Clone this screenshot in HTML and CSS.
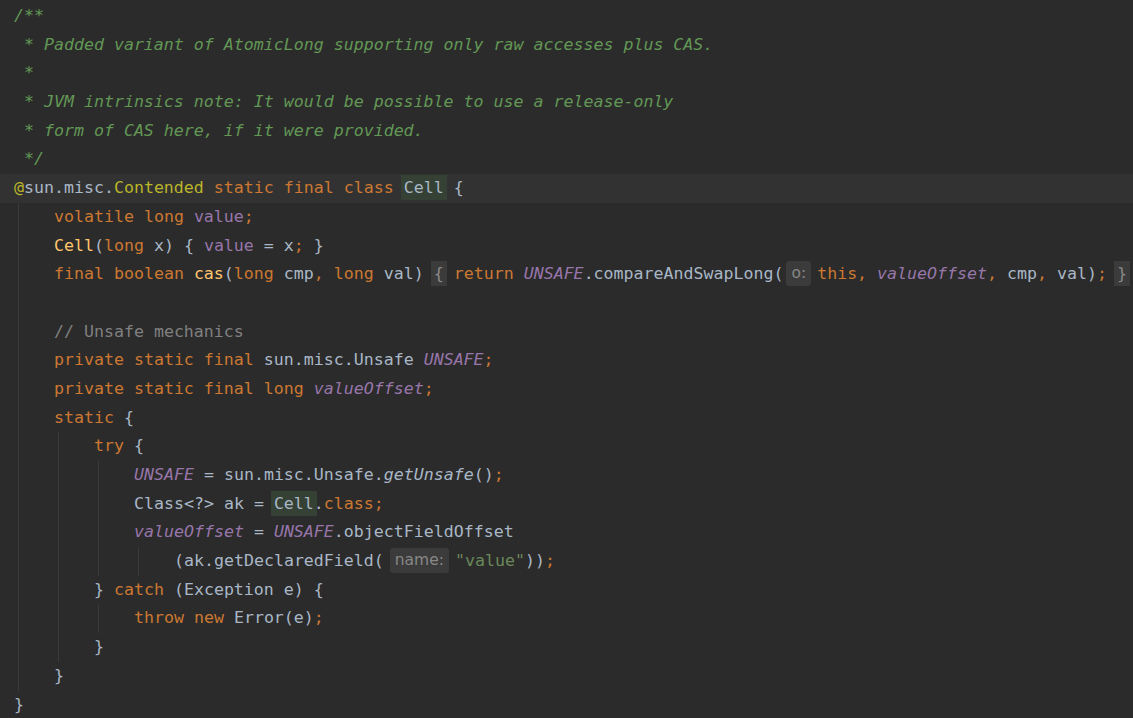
FILE: index.html
```html
<!DOCTYPE html>
<html lang="en">
<head>
    <meta charset="UTF-8">
    <title>Cell.java</title>
    <link rel="stylesheet" href="styles.css">
</head>
<body>

<div class="editor">
    <div class="ln"><span class="doc">/**</span></div>
    <div class="ln"><span class="doc"> * Padded variant of AtomicLong supporting only raw accesses plus CAS.</span></div>
    <div class="ln"><span class="doc"> *</span></div>
    <div class="ln"><span class="doc"> * JVM intrinsics note: It would be possible to use a release-only</span></div>
    <div class="ln"><span class="doc"> * form of CAS here, if it were provided.</span></div>
    <div class="ln"><span class="doc"> */</span></div>
    <div class="ln current"><span class="an">@</span>sun.misc.<span class="an">Contended</span> <span class="kw">static final class</span> <span class="hl">Cell</span> {</div>
    <div class="ln"><span class="ind"></span><span class="kw">volatile long</span> <span class="fd">value</span><span class="kw">;</span></div>
    <div class="ln"><span class="ind"></span><span class="fn">Cell</span>(<span class="kw">long</span> x) { <span class="fd">value</span> = x<span class="kw">;</span> }</div>
    <div class="ln"><span class="ind"></span><span class="kw">final boolean</span> <span class="fn">cas</span>(<span class="kw">long</span> cmp<span class="kw">,</span> <span class="kw">long</span> val) <span class="fold">{</span> <span class="kw">return</span> <span class="sf">UNSAFE</span>.compareAndSwapLong(<span class="hint">o:</span><span class="kw">this,</span> <span class="sf">valueOffset</span><span class="kw">,</span> cmp<span class="kw">,</span> val)<span class="kw">;</span> <span class="fold">}</span></div>
    <div class="ln"><span class="ind"></span></div>
    <div class="ln"><span class="ind"></span><span class="cm">// Unsafe mechanics</span></div>
    <div class="ln"><span class="ind"></span><span class="kw">private static final</span> sun.misc.Unsafe <span class="sf">UNSAFE</span><span class="kw">;</span></div>
    <div class="ln"><span class="ind"></span><span class="kw">private static final long</span> <span class="sf">valueOffset</span><span class="kw">;</span></div>
    <div class="ln"><span class="ind"></span><span class="kw">static</span> {</div>
    <div class="ln"><span class="ind"></span><span class="ind"></span><span class="kw">try</span> {</div>
    <div class="ln"><span class="ind"></span><span class="ind"></span><span class="ind"></span><span class="sf">UNSAFE</span> = sun.misc.Unsafe.<span class="it">getUnsafe</span>()<span class="kw">;</span></div>
    <div class="ln"><span class="ind"></span><span class="ind"></span><span class="ind"></span>Class&lt;?&gt; ak = <span class="hl">Cell</span>.<span class="kw">class;</span></div>
    <div class="ln"><span class="ind"></span><span class="ind"></span><span class="ind"></span><span class="sf">valueOffset</span> = <span class="sf">UNSAFE</span>.objectFieldOffset</div>
    <div class="ln"><span class="ind"></span><span class="ind"></span><span class="ind"></span><span class="ind"></span>(ak.getDeclaredField(<span class="hint wide">name:</span><span class="st">"value"</span>))<span class="kw">;</span></div>
    <div class="ln"><span class="ind"></span><span class="ind"></span>} <span class="kw">catch</span> (Exception e) {</div>
    <div class="ln"><span class="ind"></span><span class="ind"></span><span class="ind"></span><span class="kw">throw new</span> Error(e)<span class="kw">;</span></div>
    <div class="ln"><span class="ind"></span><span class="ind"></span>}</div>
    <div class="ln"><span class="ind"></span>}</div>
    <div class="ln">}</div>
</div>

</body>
</html>
```

FILE: styles.css
```css
html, body {
    margin: 0;
    height: 100%;
    background: #2b2b2b;
    overflow: hidden;
}
.editor {
    padding: 2px 0 0 0;
    font-family: "DejaVu Sans Mono", "Liberation Mono", monospace;
    font-size: 16.6px;
    color: #a9b7c6;
}
.ln {
    height: 28.7px;
    line-height: 28.7px;
    padding-left: 14px;
    white-space: pre;
}
.ln.current {
    background: #323232;
}
.ind {
    display: inline-block;
    width: 40px;
    height: 28.7px;
    vertical-align: top;
    background: linear-gradient(to right, transparent 4px, #3a3a3a 4px, #3a3a3a 5px, transparent 5px);
}
.doc {
    color: #629755;
    font-style: italic;
}
.cm {
    color: #808080;
}
.kw {
    color: #cc7832;
}
.an {
    color: #bbb529;
}
.fd {
    color: #9876aa;
}
.sf {
    color: #9876aa;
    font-style: italic;
}
.fn {
    color: #ffc66d;
}
.st {
    color: #6a8759;
}
.it {
    font-style: italic;
}
.hl {
    background: #344134;
    box-shadow: 0 0 0 3px #344134;
}
.fold {
    background: #3b3b3b;
    box-shadow: 0 0 0 3px #3b3b3b;
    color: #8a8a8a;
}
.hint {
    display: inline-block;
    height: 25px;
    line-height: 25px;
    vertical-align: middle;
    margin: -3px 6px 0 3px;
    padding: 0 5px;
    border-radius: 3px;
    background: #3b3b3b;
    color: #878787;
    font-family: "DejaVu Sans", sans-serif;
    font-size: 15.5px;
    font-style: normal;
}
.hint.wide {
    margin-left: 6px;
    margin-right: 6px;
}
```
